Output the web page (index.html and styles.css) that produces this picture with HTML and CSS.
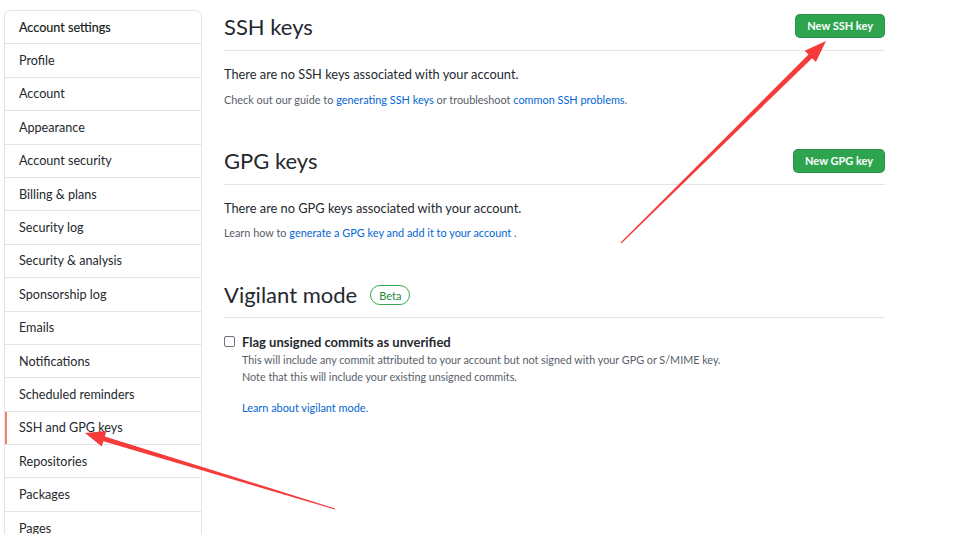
FILE: index.html
```html
<!DOCTYPE html>
<html lang="en">
<head>
<meta charset="utf-8">
<title>SSH and GPG keys</title>
<link rel="stylesheet" href="styles.css">
</head>
<body>
<div class="layout">
  <nav class="menu">
    <div class="menu-heading">Account settings</div>
    <a class="menu-item">Profile</a>
    <a class="menu-item">Account</a>
    <a class="menu-item">Appearance</a>
    <a class="menu-item">Account security</a>
    <a class="menu-item">Billing &amp; plans</a>
    <a class="menu-item">Security log</a>
    <a class="menu-item">Security &amp; analysis</a>
    <a class="menu-item">Sponsorship log</a>
    <a class="menu-item">Emails</a>
    <a class="menu-item">Notifications</a>
    <a class="menu-item">Scheduled reminders</a>
    <a class="menu-item selected">SSH and GPG keys</a>
    <a class="menu-item">Repositories</a>
    <a class="menu-item">Packages</a>
    <a class="menu-item">Pages</a>
  </nav>
  <main class="main">
    <section class="sec">
      <div class="subhead">
        <h2 class="subhead-heading">SSH keys</h2>
        <button class="btn">New SSH key</button>
      </div>
      <p class="blank">There are no SSH keys associated with your account.</p>
      <p class="note">Check out our guide to <a class="link">generating SSH keys</a> or troubleshoot <a class="link">common SSH problems</a>.</p>
    </section>
    <section class="sec sec-gpg">
      <div class="subhead">
        <h2 class="subhead-heading">GPG keys</h2>
        <button class="btn btn-gpg">New GPG key</button>
      </div>
      <p class="blank">There are no GPG keys associated with your account.</p>
      <p class="note note-gpg">Learn how to <a class="link">generate a GPG key and add it to your account</a> .</p>
    </section>
    <section class="sec sec-vig">
      <div class="subhead subhead-vig">
        <h2 class="subhead-heading">Vigilant mode</h2>
        <span class="badge">Beta</span>
      </div>
      <div class="check">
        <span class="box"></span>
        <div class="check-body">
          <div class="check-label">Flag unsigned commits as unverified</div>
          <div class="check-note">This will include any commit attributed to your account but not signed with your GPG or S/MIME key.</div>
          <div class="check-note">Note that this will include your existing unsigned commits.</div>
          <a class="link check-link">Learn about vigilant mode.</a>
        </div>
      </div>
    </section>
  </main>
</div>
<svg class="annot" width="959" height="534" viewBox="0 0 959 534">
  <polygon fill="#f63b3b" points="621.4,243.4 812.1,58.2 815.9,62.1 826,41 804.7,50.7 808.5,54.6 620.6,242.6"/>
  <polygon fill="#f63b3b" points="335.1,508.5 104.8,436.4 106.4,431.1 85,433 101.8,446.5 103.4,441.2 334.9,509.5"/>
</svg>
</body>
</html>
```

FILE: styles.css
```css
* { box-sizing: border-box; }
html, body { margin: 0; padding: 0; background: #fff; }
body {
  font-family: Lato, "Noto Sans", sans-serif;
  color: #24292e;
  font-size: 13px;
  overflow: hidden;
  height: 534px;
}
.layout {
  display: flex;
  gap: 22px;
  padding-left: 4px;
}
.menu {
  width: 198px;
  margin-top: 10px;
  border: 1px solid #e1e4e8;
  border-radius: 6px;
  display: flex;
  flex-direction: column;
  flex-shrink: 0;
}
.menu-heading, .menu-item {
  display: flex;
  align-items: center;
  height: 33.4px;
  padding-left: 14px;
  border-bottom: 1px solid #e1e4e8;
  font-size: 12.6px;
  color: #24292e;
}
.menu-heading { color: #1b1f23; -webkit-text-stroke: 0.2px #1b1f23; }
.menu-item.selected {
  box-shadow: inset 2px 0 0 #f9826c;
}
.main {
  width: 661px;
  padding-top: 14px;
}
.subhead {
  display: flex;
  align-items: flex-start;
  justify-content: space-between;
  padding-bottom: 10px;
  border-bottom: 1px solid #e1e4e8;
}
.subhead-heading {
  margin: 0;
  font-size: 22px;
  line-height: 26px;
  font-weight: 400;
}
.btn {
  height: 24px;
  padding: 0 11px;
  border: 1px solid rgba(27,31,35,0.15);
  border-radius: 5px;
  background: #2ea44f;
  color: #fff;
  font-family: inherit;
  font-size: 11px;
  font-weight: 700;
  line-height: 22px;
}
.btn-gpg { margin-top: 1px; }
.blank {
  margin: 13px 0 0;
  line-height: 20px;
  font-size: 12.8px;
}
.note {
  margin: 7px 0 0;
  font-size: 10.9px;
  line-height: 18px;
  color: #586069;
}
.note-gpg { margin-top: 6px; }
.link { color: #0366d6; text-decoration: none; }
.sec-gpg { margin-top: 39px; }
.sec-vig { margin-top: 40px; }
.subhead-vig {
  justify-content: flex-start;
  align-items: center;
  gap: 13px;
  padding-bottom: 9px;
}
.badge {
  display: inline-flex;
  align-items: center;
  height: 20px;
  padding: 0 8px;
  border: 1px solid #34a853;
  border-radius: 10px;
  color: #22863a;
  font-size: 11px;
}
.check {
  display: flex;
  gap: 7px;
  margin-top: 15px;
}
.box {
  width: 11px;
  height: 11px;
  margin-top: 3px;
  border: 1px solid #6a737d;
  border-radius: 2px;
  flex-shrink: 0;
}
.check-body { display: flex; flex-direction: column; }
.check-label {
  font-weight: 700;
  font-size: 13px;
  line-height: 18px;
}
.check-note {
  font-size: 10.8px;
  line-height: 17px;
  color: #586069;
}
.check-link {
  margin-top: 14px;
  font-size: 10.9px;
  line-height: 17px;
}
.annot {
  position: absolute;
  left: 0;
  top: 0;
  pointer-events: none;
}
```
